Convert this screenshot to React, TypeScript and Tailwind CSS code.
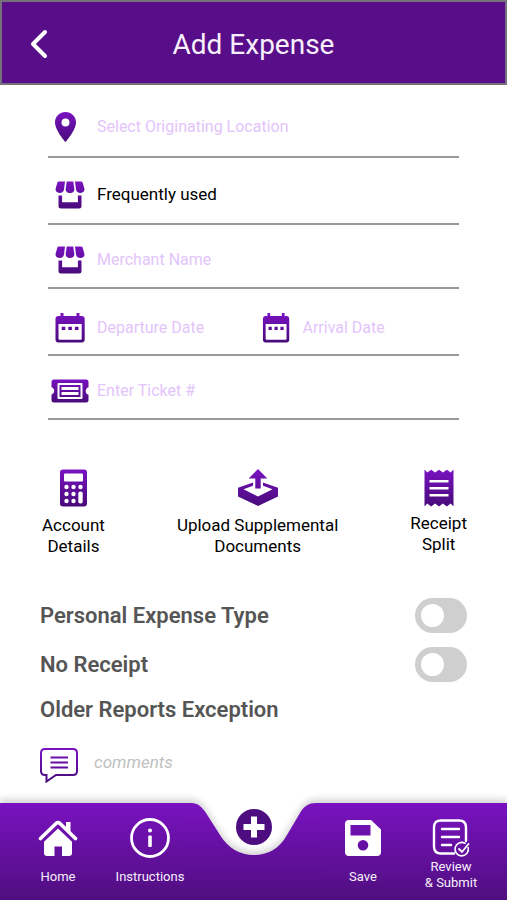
import { useId, useState } from 'react';
import type { ReactNode } from 'react';

type IconProps = { w: number; h: number; className?: string; children: (fill: string) => ReactNode };

// every purple icon runs from a bright top to a dark bottom
function GradientIcon({ w, h, className, children }: IconProps) {
  const id = useId();
  return (
    <svg width={w} height={h} viewBox={`0 0 ${w} ${h}`} className={className} aria-hidden="true">
      <defs>
        <linearGradient id={id} gradientUnits="userSpaceOnUse" x1="0" y1="0" x2="0" y2={h}>
          <stop offset="0" stopColor="#7a12c2" />
          <stop offset="1" stopColor="#470b78" />
        </linearGradient>
      </defs>
      {children(`url(#${id})`)}
    </svg>
  );
}

const PinIcon = () => (
  <GradientIcon w={30} h={30}>
    {(fill) => (
      <path
        fill={fill}
        fillRule="evenodd"
        d="M10.5 0C4.7 0 0 4.6 0 10.4 0 18 10.5 30 10.5 30S21 18 21 10.4C21 4.6 16.3 0 10.5 0zm0 6.5a4 4 0 1 1 0 8 4 4 0 0 1 0-8z"
      />
    )}
  </GradientIcon>
);

const StoreIcon = () => (
  <GradientIcon w={30} h={28}>
    {(fill) => (
      <g fill={fill}>
        <path d="M4 .5h6L9 8.5C8.7 10.7 7 12 4.7 12 2 12 .2 10 .6 7.8L2.3 1.8Q2.7.5 4 .5z" />
        <path d="M11.7.5h6.6L19.3 8c.3 2.5-1.7 4-4.3 4s-4.6-1.5-4.300-4z" />
        <path d="M26 .5h-6l1 8c.3 2.2 2 3.5 4.3 3.5 2.7 0 4.5-2 4.1-4.2l-1.7-6Q27.3.5 26 .5z" />
        <path d="M3.5 14.5h3.6v6.8h15.800v-6.800h3.600V25q0 2.500-2.500 2.500H6Q3.500 27.500 3.500 25z" />
      </g>
    )}
  </GradientIcon>
);

const CalendarIcon = ({ narrow = false }: { narrow?: boolean }) => (
  <GradientIcon w={30} h={30}>
    {(fill) => (
      <g fill={fill} transform={narrow ? 'translate(1.5 0) scale(.9 1)' : undefined}>
        <path
          fillRule="evenodd"
          d="M5.5 0h3v3h13V0h3v3h2Q29.7 3 29.7 6v20.5q0 3-3 3H3.5q-3 0-3-3V6q0-3 3-3h2zM3.5 11v14.7q0 1 1 1h21.2q1 0 1-1V11z"
        />
        <path d="M6.7 13.7h3.6v3.4H6.7zM13.3 13.7h3.6v3.4h-3.6zM19.9 13.7h3.6v3.4h-3.6z" />
      </g>
    )}
  </GradientIcon>
);

const TicketIcon = () => (
  <GradientIcon w={38} h={24}>
    {(fill) => (
      <g fill={fill} fillRule="evenodd">
        <path d="M3 .5h32Q37.5.5 37.5 3v5.200a4 4 0 0 0 0 7.600V21q0 2.500-2.500 2.500H3Q.5 23.500.5 21v-5.200a4 4 0 0 0 0-7.600V3Q.5.5 3 .5zM7.500 4q-1 0-1 1v14q0 1 1 1h23q1 0 1-1V5q0-1-1-1z" />
        <path d="M8.500 6h21v12h-21zm2 2v2.900h17V8zm0 5.100V16h17v-2.900z" />
      </g>
    )}
  </GradientIcon>
);

const CalculatorIcon = () => (
  <GradientIcon w={27} h={38}>
    {(fill) => (
      <>
        <rect x="0" y=".5" width="27" height="37" rx="3" fill={fill} />
        <g fill="#fff">
          <rect x="4" y="4.500" width="19" height="8" rx="1" />
          <circle cx="6.500" cy="18" r="2.200" />
          <circle cx="13.500" cy="18" r="2.200" />
          <circle cx="20.500" cy="18" r="2.200" />
          <circle cx="6.500" cy="25" r="2.200" />
          <circle cx="13.500" cy="25" r="2.200" />
          <circle cx="6.500" cy="32" r="2.200" />
          <circle cx="13.500" cy="32" r="2.200" />
          <rect x="18.300" y="22.500" width="4.400" height="12" rx="2" />
        </g>
      </>
    )}
  </GradientIcon>
);

const UploadIcon = () => (
  <GradientIcon w={40} h={38}>
    {(fill) => (
      <g fill={fill}>
        <path d="M20 0l9.300 9.500h-6.600v10h-5.400v-10h-6.600z" />
        <path
          fillRule="evenodd"
          d="M15 13.600v3.200L5.500 20.300 20 27.500l14.500-7.200-9.500-3.500v-3.200l15 5.200v8.700L20 37 0 27.500v-8.700z"
        />
      </g>
    )}
  </GradientIcon>
);

const ReceiptIcon = () => (
  <GradientIcon w={30} h={38}>
    {(fill) => (
      <>
        <path
          fill={fill}
          d="M.5.5L3.300 3.500 7.200.8 11.100 3.500 15 .8l3.900 2.700L22.800.8l3.900 2.700L29.500.5v37l-2.800-3-3.900 3-3.900-3-3.900 3-3.900-3-3.900 3-3.900-3-2.800 3z"
        />
        <path d="M5.500 12.300h19M5.500 19.300h19M5.500 26.300h19" stroke="#fff" strokeWidth="2.400" />
      </>
    )}
  </GradientIcon>
);

const CommentIcon = () => (
  <GradientIcon w={38} h={35}>
    {(fill) => (
      <g fill="none" stroke={fill} strokeWidth="2">
        <path d="M5 1h28q4 0 4 4v18q0 4-4 4H16L6.500 33.500V27H5q-4 0-4-4V5q0-4 4-4z" />
        <path d="M10.500 9.500h17.500M10.500 14.500h17.500M10.500 19.500h17.500" strokeWidth="2.200" />
      </g>
    )}
  </GradientIcon>
);

const HomeIcon = () => (
  <svg width="40" height="40" viewBox="0 0 40 40" aria-hidden="true">
    <path d="M2.500 20.500L18 5.500q2-1.800 4 0l15.500 15" fill="none" stroke="#fff" strokeWidth="3.600" strokeLinecap="round" />
    <path d="M28 4h4.500v10.500L28 10.300z" fill="#fff" />
    <path d="M20 10.500l14 13.300V35q0 3-3 3h-7V28.500h-7.500V38H9q-3 0-3-3V23.800z" fill="#fff" />
  </svg>
);

const InfoIcon = () => (
  <svg width="40" height="40" viewBox="0 0 40 40" aria-hidden="true">
    <circle cx="20" cy="20" r="18.500" fill="none" stroke="#fff" strokeWidth="2.800" />
    <circle cx="20" cy="12.500" r="2" fill="#fff" />
    <rect x="18.200" y="17.500" width="3.600" height="11.500" rx="1" fill="#fff" />
  </svg>
);

const SaveIcon = () => (
  <svg width="40" height="40" viewBox="0 0 40 40" aria-hidden="true">
    <path
      fill="#fff"
      fillRule="evenodd"
      d="M6 2h22l10 9.500V34q0 4-4 4H6q-4 0-4-4V6q0-4 4-4zm1.500 5v10.500h20V7zM20 22a5.300 5.300 0 1 0 0 10.600A5.300 5.300 0 0 0 20 22z"
    />
  </svg>
);

const ReviewIcon = () => (
  <svg width="40" height="40" viewBox="0 0 40 40" fill="none" stroke="#fff" strokeLinecap="round" aria-hidden="true">
    <path d="M23 35.500H10q-7 0-7-7V9.500q0-7 7-7h18q7 0 7 7V23" strokeWidth="2.400" />
    <path d="M11 11h17M11 19h17M11 27h9" strokeWidth="2.400" />
    <path d="M37.200 29.500a6.700 6.700 0 1 1-3.200-4.200" strokeWidth="1.600" />
    <path d="M28 31l3 3 6.500-8" strokeWidth="1.800" />
  </svg>
);

type FieldProps = { id: string; label: string; icon: ReactNode };

function Field({ id, label, icon }: FieldProps) {
  return (
    <div className="flex min-w-0 flex-1 items-center gap-[5px]">
      <label htmlFor={id} aria-label={label} className="flex w-11 shrink-0 justify-center">
        {icon}
      </label>
      <input
        id={id}
        type="text"
        placeholder={label}
        className="w-full min-w-0 bg-transparent text-base text-black outline-none placeholder:text-[#e3c4fb]"
      />
    </div>
  );
}

function Toggle({ id, label }: { id: string; label: string }) {
  const [on, setOn] = useState(false);
  return (
    <div className="flex items-center justify-between">
      <label htmlFor={id} className="text-[22px] leading-7 font-semibold text-[#555555]">
        {label}
      </label>
      <input
        id={id}
        type="checkbox"
        role="switch"
        checked={on}
        onChange={(e) => setOn(e.target.checked)}
        className="flex h-[35px] w-[52px] cursor-pointer appearance-none items-center rounded-full bg-[#cfcfcf] px-[6px] before:size-[23px] before:rounded-full before:bg-white checked:justify-end checked:bg-[#7a12c2]"
      />
    </div>
  );
}

const NAV_LEFT = [
  { label: 'Home', icon: HomeIcon },
  { label: 'Instructions', icon: InfoIcon },
];

export default function App() {
  return (
    <div className="flex min-h-screen flex-col bg-white font-[Roboto,sans-serif] text-black">
      <header className="grid h-[85px] grid-cols-[1fr_auto_1fr] items-center border-2 border-[#77707d] bg-[#580e89] px-6 pt-1">
        <button type="button" aria-label="Back" className="justify-self-start">
          <svg width="22" height="32" viewBox="0 0 22 32" fill="none" aria-hidden="true">
            <path d="M19 3L7 15 19 27" stroke="#fff" strokeWidth="4" strokeLinecap="round" strokeLinejoin="round" />
          </svg>
        </button>
        <h1 className="text-[28px] leading-9 text-[#f8effc]">Add Expense</h1>
      </header>

      <main className="flex-1 pb-5">
        <div className="mx-12">
          <div className="flex h-[73px] border-b-2 border-[#999999] pt-3">
            <Field id="location" label="Select Originating Location" icon={<PinIcon />} />
          </div>
          <div className="flex h-[67px] items-center gap-[5px] border-b-2 border-[#999999] pt-2">
            <label htmlFor="source" aria-label="Merchant list" className="flex w-11 shrink-0 justify-center">
              <StoreIcon />
            </label>
            <select id="source" className="w-full appearance-none bg-transparent text-[17px] outline-none">
              <option>Frequently used</option>
            </select>
          </div>
          <div className="flex h-16 border-b-2 border-[#999999] pt-2">
            <Field id="merchant" label="Merchant Name" icon={<StoreIcon />} />
          </div>
          <div className="flex h-[67px] border-b-2 border-[#999999] pt-3">
            <Field id="departure" label="Departure Date" icon={<CalendarIcon />} />
            <Field id="arrival" label="Arrival Date" icon={<CalendarIcon narrow />} />
          </div>
          <div className="flex h-16 border-b-2 border-[#999999] pt-2">
            <Field id="ticket" label="Enter Ticket #" icon={<TicketIcon />} />
          </div>
        </div>

        <div className="flex items-start justify-between pt-[49px] pr-10 pl-[42px] text-[17px] leading-[21px]">
          <button type="button" className="flex flex-col items-center gap-2">
            <CalculatorIcon />
            <span>Account<br />Details</span>
          </button>
          <button type="button" className="flex flex-col items-center gap-2">
            <UploadIcon />
            <span>Upload Supplemental<br />Documents</span>
          </button>
          <button type="button" className="flex flex-col items-center gap-1.5">
            <ReceiptIcon />
            <span>Receipt<br />Split</span>
          </button>
        </div>

        <div className="mt-[41px] flex flex-col gap-[14px] px-10">
          <Toggle id="personal" label="Personal Expense Type" />
          <Toggle id="no-receipt" label="No Receipt" />
        </div>
        <h2 className="mt-3.5 px-10 text-[22px] leading-7 font-semibold text-[#555555]">Older Reports Exception</h2>

        <div className="mt-6 flex items-start gap-4 px-10">
          <label htmlFor="comments" aria-label="Comments">
            <CommentIcon />
          </label>
          <input
            id="comments"
            type="text"
            placeholder="comments"
            className="h-7 min-w-0 flex-1 bg-transparent text-[17px] italic outline-none placeholder:text-[#c0c0c0]"
          />
        </div>
      </main>

      <nav className="relative h-[97px] text-[13px] leading-4 text-[#f8effc]">
        {/* bar with the notch for the round button */}
        <div className="absolute inset-0 flex drop-shadow-[0_-4px_3px_rgba(0,0,0,0.16)]">
          <div className="flex-1 bg-linear-to-b from-[#7912c0] to-[#500e80]" />
          <svg width="137" height="97" viewBox="0 0 137 97" className="shrink-0" aria-hidden="true">
            <defs>
              <linearGradient id="bar" x1="0" y1="0" x2="0" y2="1">
                <stop offset="0" stopColor="#7912c0" />
                <stop offset="1" stopColor="#500e80" />
              </linearGradient>
            </defs>
            <path
              fill="url(#bar)"
              d="M0 0H6C13 0 17 4 21 10L35 32C44 46 55 52 69 52S94 46 102 32L115 10C119 3 124 0 131 0H137V97H0z"
            />
          </svg>
          <div className="flex-1 bg-linear-to-b from-[#7912c0] to-[#500e80]" />
        </div>

        <div className="relative grid h-full grid-cols-[1fr_auto_1fr] px-3">
          <div className="flex">
            {NAV_LEFT.map(({ label, icon: Icon }) => (
              <a key={label} href="#" className="flex w-[92px] flex-col items-center gap-2 pt-[15px]">
                <Icon />
                <span className="pt-[3px]">{label}</span>
              </a>
            ))}
          </div>
          <button type="button" aria-label="Add" className="mt-[6px] size-9 rounded-full bg-[#4d0d80]">
            <svg width="36" height="36" viewBox="0 0 36 36" aria-hidden="true">
              <path d="M18 7.500v21M7.500 18h21" stroke="#fff" strokeWidth="6" />
            </svg>
          </button>
          <div className="flex justify-end">
            <a href="#" className="flex w-22 flex-col items-center gap-2 pt-[15px]">
              <SaveIcon />
              <span className="pt-[3px]">Save</span>
            </a>
            <a href="#" className="flex w-22 flex-col items-center gap-px pt-[15px] text-center">
              <ReviewIcon />
              <span>Review<br />&amp; Submit</span>
            </a>
          </div>
        </div>
      </nav>
    </div>
  );
}
